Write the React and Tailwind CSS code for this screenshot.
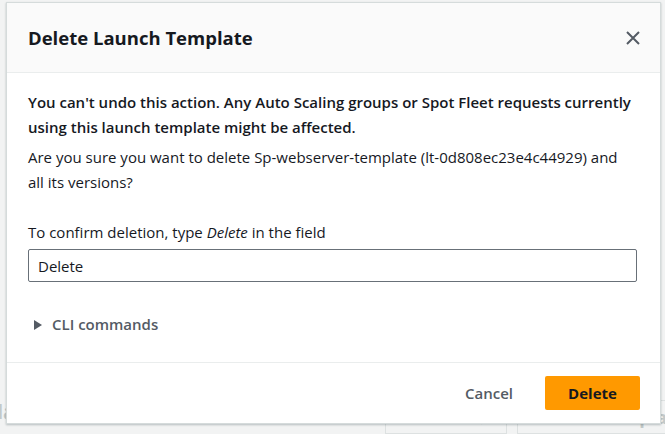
import React, { useState } from "react";

const font = { fontFamily: "'Open Sans', Roboto, sans-serif" };

const App = () => {
  const [value, setValue] = useState("Delete"); // confirmation field text

  return (
    <div className="relative w-[665px] h-[434px] overflow-hidden bg-[#f2f3f3] text-[#16191f]" style={font}>
      {/* faded page behind the modal */}
      <div className="flex flex-col h-full">
        <div className="h-[417px]" />
        <div className="flex items-start">
          <div className="w-[178px] flex justify-end">
            <h2 className="text-[19px] leading-[24px] font-bold text-[#c3c9c9] whitespace-nowrap">Launch template version details</h2>
          </div>
          <div className="ml-auto flex gap-[10px] mr-[-42px]">
            <div className="w-[122px] h-[34px] border border-[#dde1e1] text-[#c3c9c9] font-bold text-[18px] flex items-start pt-[3px] justify-center">Actions ▾</div>
            <div className="w-[190px] h-[34px] border border-[#dde1e1] text-[#c3c9c9] font-bold text-[18px] flex items-start pt-[3px] px-[22px] whitespace-nowrap">Delete template</div>
          </div>
        </div>
      </div>

      {/* modal */}
      <div className="absolute left-[6px] top-[2px] w-[655px] bg-white border border-[#d5dbdb] shadow-[0_1px_2px_rgba(0,28,36,0.25)]">
        <div className="h-[70px] bg-[#fafafa] border-b border-[#eaeded] flex items-center px-[21px]">
          <h1 className="text-[18.5px] font-bold">Delete Launch Template</h1>
          <button className="ml-auto mr-[-2px] text-[#545b64]">
            <svg width="16" height="16" viewBox="0 0 16 16" fill="none" stroke="currentColor" strokeWidth="2">
              <path d="M2 2l12 12M14 2L2 14" />
            </svg>
          </button>
        </div>

        <div className="pl-[21px] pr-[23px] pt-[17px] pb-[25px] text-[15px] leading-[25px]">
          <p className="font-semibold">
            You can't undo this action. Any Auto Scaling groups or Spot Fleet requests currently using this launch
            template might be affected.
          </p>
          <p className="mt-[5px] max-w-[592px]">
            Are you sure you want to delete Sp-webserver-template (lt-0d808ec23e4c44929) and all its versions?
          </p>
          <p className="mt-[25px]">
            To confirm deletion, type <i>Delete</i> in the field
          </p>
          <input
            value={value}
            onChange={(e) => setValue(e.target.value)}
            className="mt-[4px] w-full h-[33px] border border-[#687078] rounded-[2px] px-[9px] text-[15px] outline-none"
          />
          <div className="mt-[30px] flex items-center gap-[9px] pl-[5px] text-[#545b64] font-semibold">
            <svg width="10" height="10" viewBox="0 0 10 10">
              <path d="M1 0l8 5-8 5z" fill="currentColor" />
            </svg>
            <span>CLI commands</span>
          </div>
        </div>

        <div className="border-t border-[#eaeded] h-[61px] flex items-center justify-end gap-[24px] px-[20px] text-[15px] font-semibold">
          <button className="px-[8px] text-[#545b64]">Cancel</button>
          <button className="w-[95px] h-[34px] bg-[#ff9900] rounded-[2px] text-[#16191f] font-bold">Delete</button>
        </div>
      </div>
    </div>
  );
};

export default App;
